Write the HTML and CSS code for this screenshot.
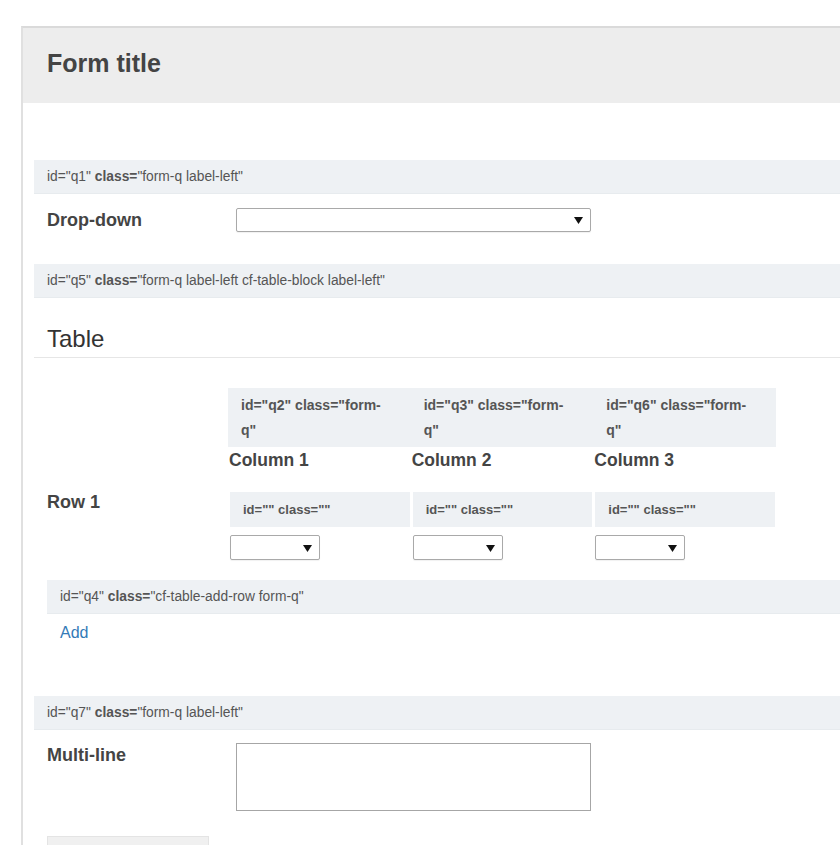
FILE: index.html
```html
<!DOCTYPE html>
<html lang="en">
<head>
<meta charset="utf-8">
<title>Form</title>
<link rel="stylesheet" href="styles.css">
</head>
<body>
<div class="page">
  <div class="form">
    <header class="form-head">
      <h1 class="form-title">Form title</h1>
    </header>
    <div class="form-body">
      <section class="q">
        <div class="qbar">id="q1" <b>class=</b>"form-q label-left"</div>
        <div class="field">
          <label class="flabel">Drop-down</label>
          <span class="sel sel-wide">
            <select class="sel-box"></select>
            <svg class="sel-arrow" viewBox="0 0 9 7" width="9" height="7"><path d="M0 0H9L4.5 7Z" fill="#111"/></svg>
          </span>
        </div>
      </section>

      <section class="q q-table">
        <div class="qbar">id="q5" <b>class=</b>"form-q label-left cf-table-block label-left"</div>
        <h2 class="tbl-title">Table</h2>
        <div class="tbl">
          <div class="corner"></div>
          <div class="colhead">
            <div class="cbar">id="q2" class="form-q"</div>
            <div class="clabel">Column 1</div>
          </div>
          <div class="colhead">
            <div class="cbar">id="q3" class="form-q"</div>
            <div class="clabel">Column 2</div>
          </div>
          <div class="colhead">
            <div class="cbar">id="q6" class="form-q"</div>
            <div class="clabel">Column 3</div>
          </div>

          <div class="rlabel">Row 1</div>
          <div class="cell">
            <div class="cellbar">id="" class=""</div>
            <span class="sel sel-sm">
              <select class="sel-box"></select>
              <svg class="sel-arrow" viewBox="0 0 9 7" width="9" height="7"><path d="M0 0H9L4.5 7Z" fill="#111"/></svg>
            </span>
          </div>
          <div class="cell">
            <div class="cellbar">id="" class=""</div>
            <span class="sel sel-sm">
              <select class="sel-box"></select>
              <svg class="sel-arrow" viewBox="0 0 9 7" width="9" height="7"><path d="M0 0H9L4.5 7Z" fill="#111"/></svg>
            </span>
          </div>
          <div class="cell">
            <div class="cellbar">id="" class=""</div>
            <span class="sel sel-sm">
              <select class="sel-box"></select>
              <svg class="sel-arrow" viewBox="0 0 9 7" width="9" height="7"><path d="M0 0H9L4.5 7Z" fill="#111"/></svg>
            </span>
          </div>
        </div>
        <div class="addrow">
          <div class="qbar">id="q4" <b>class=</b>"cf-table-add-row form-q"</div>
          <a class="add" href="#">Add</a>
        </div>
      </section>

      <section class="q q-multi">
        <div class="qbar">id="q7" <b>class=</b>"form-q label-left"</div>
        <div class="field field-multi">
          <label class="flabel">Multi-line</label>
          <textarea class="ta"></textarea>
        </div>
      </section>

      <div class="submit"></div>
    </div>
  </div>
</div>
</body>
</html>
```
FILE: styles.css
```css
* { box-sizing: border-box; }

html, body {
  height: 100%;
}

body {
  margin: 0;
  font-family: "Liberation Sans", Arial, sans-serif;
  color: #333;
  background: #fff;
  overflow: hidden;
}

.page {
  height: 100%;
  overflow: hidden;
  padding: 26px 0 0 21px;
}

.form {
  height: 100%;
  border-top: 2px solid #dadada;
  border-left: 2px solid #e0e0e0;
}

.form-head {
  background: #ededed;
  height: 75px;
  padding: 20px 0 0 24px;
}

.form-title {
  margin: 0;
  font-size: 25px;
  line-height: 30px;
  font-weight: bold;
  color: #444;
}

.form-body {
  padding: 57px 0 0 11px;
}

.qbar {
  height: 34px;
  line-height: 34px;
  background: #eef1f4;
  border-bottom: 1px solid #e7ebee;
  padding-left: 13px;
  font-size: 13.8px;
  color: #555;
  white-space: nowrap;
}

.qbar b {
  font-weight: bold;
}

.field {
  display: flex;
  align-items: flex-start;
  margin-top: 14px;
}

.flabel {
  flex: 0 0 202px;
  padding-left: 13px;
  font-size: 18px;
  line-height: 24px;
  font-weight: bold;
  color: #444;
}

.sel {
  position: relative;
  display: inline-block;
}

.sel-box {
  -webkit-appearance: none;
  appearance: none;
  display: block;
  width: 100%;
  height: 100%;
  margin: 0;
  background: #fff;
  border: 1px solid #a9a9a9;
  border-radius: 2px;
  box-shadow: 0 1px 1px rgba(0,0,0,0.06);
}

.sel-arrow {
  position: absolute;
  top: 50%;
  margin-top: -3px;
  right: 8px;
}

.sel-wide {
  width: 355px;
  height: 24px;
}

.sel-sm {
  width: 90px;
  height: 25px;
  margin-top: 8px;
}

.q-table {
  margin-top: 32px;
}

.tbl-title {
  margin: 26px 0 0;
  padding: 0 0 3px 13px;
  font-size: 24px;
  line-height: 30px;
  font-weight: normal;
  color: #333;
  border-bottom: 1px solid #e6e6e6;
}

.tbl {
  display: grid;
  grid-template-columns: 194px repeat(3, 182.67px);
  row-gap: 21px;
  margin-top: 30px;
}

.cbar {
  height: 59px;
  padding: 5px 20px 0 13px;
  background: #eef1f4;
  font-size: 14px;
  line-height: 25px;
  font-weight: bold;
  color: #555;
}

.clabel {
  margin-top: 2px;
  padding-left: 1px;
  font-size: 17.5px;
  line-height: 22px;
  font-weight: bold;
  color: #444;
}

.rlabel {
  padding-left: 13px;
  font-size: 18px;
  line-height: 20px;
  font-weight: bold;
  color: #444;
}

.cell {
  padding: 0 1px 0 2px;
}

.cellbar {
  height: 35px;
  line-height: 35px;
  padding-left: 13px;
  background: #eef1f4;
  font-size: 13px;
  font-weight: bold;
  color: #555;
}

.cell .sel {
  display: block;
}

.addrow {
  margin: 20px 0 0 13px;
}

.add {
  display: block;
  margin-top: 9px;
  padding-left: 13px;
  font-size: 16px;
  line-height: 20px;
  color: #337ab7;
  text-decoration: none;
}

.q-multi {
  margin-top: 53px;
}

.field-multi {
  margin-top: 13px;
}

.ta {
  display: block;
  width: 355px;
  height: 68px;
  margin: 0;
  border: 1px solid #a6a6a6;
  resize: none;
  background: #fff;
}

.submit {
  margin: 25px 0 0 13px;
  width: 162px;
  height: 40px;
  background: #f0f0f0;
  border: 1px solid #e4e4e4;
}
```
